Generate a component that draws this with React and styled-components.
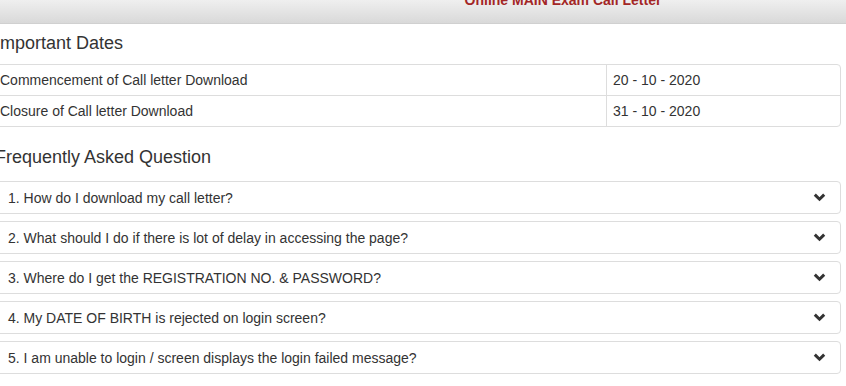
import React from 'react';
import styled, { createGlobalStyle } from 'styled-components';

const GlobalStyle = createGlobalStyle`
  body {
    margin: 0;
    background: #fff;
    font-family: "Liberation Sans", Arial, sans-serif;
    color: #333;
    overflow: hidden;
  }
`;

const Header = styled.div`
  height: 23px;
  background: linear-gradient(#efefef, #d9d9d9);
  border-bottom: 1px solid #d0d0d0;
  display: flex;
  justify-content: center;
  overflow: hidden;
`;

const HeaderTitle = styled.div`
  margin-top: -9px;
  margin-left: 280px;
  font-size: 14px;
  font-weight: bold;
  color: #a32626;
  line-height: 18px;
`;

const Content = styled.div`
  margin-left: -8px;
  width: 849px;
`;

const SectionTitle = styled.h3`
  margin: 0;
  padding: ${p => p.$pad || '8px 0 0 3px'};
  font-size: 18px;
  font-weight: normal;
  line-height: 22px;
  color: #333;
`;

const Table = styled.div`
  margin-top: 10px;
  border: 1px solid #ddd;
  border-radius: 4px;
  overflow: hidden;
`;

const Row = styled.div`
  display: grid;
  grid-template-columns: 613px 1fr;
  height: 30px;
  & + & {
    border-top: 1px solid #ddd;
  }
`;

const Cell = styled.div`
  padding: 0 8px 0 ${p => p.$padLeft || '7px'};
  font-size: 14px;
  line-height: 30px;
  & + & {
    border-left: 1px solid #ddd;
  }
`;

const PanelList = styled.div`
  margin-top: 13px;
  display: flex;
  flex-direction: column;
  gap: 7px;
`;

const Panel = styled.div`
  border: 1px solid #ddd;
  border-radius: 4px;
  height: 31px;
  padding: 0 14px 0 15px;
  display: flex;
  align-items: center;
  justify-content: space-between;
  font-size: 14px;
`;

const Chevron = () => (
  <svg width="13" height="9" viewBox="0 0 13 9">
    <polyline points="1.8,1.6 6.5,6.2 11.2,1.6" fill="none" stroke="#333" strokeWidth="3" />
  </svg>
);

const dates = [
  ['Commencement of Call letter Download', '20 - 10 - 2020'],
  ['Closure of Call letter Download', '31 - 10 - 2020'],
];

const questions = [
  '1. How do I download my call letter?',
  '2. What should I do if there is lot of delay in accessing the page?',
  '3. Where do I get the REGISTRATION NO. & PASSWORD?',
  '4. My DATE OF BIRTH is rejected on login screen?',
  '5. I am unable to login / screen displays the login failed message?',
];

export default function App() {
  return (
    <>
      <GlobalStyle />
      <Header>
        <HeaderTitle>Online MAIN Exam Call Letter</HeaderTitle>
      </Header>
      <Content>
        <SectionTitle>Important Dates</SectionTitle>
        <Table>
          {dates.map(([label, value]) => (
            <Row key={label}>
              <Cell>{label}</Cell>
              <Cell $padLeft="6px">{value}</Cell>
            </Row>
          ))}
        </Table>
        <SectionTitle $pad="19px 0 0 3px">Frequently Asked Question</SectionTitle>
        <PanelList>
          {questions.map(q => (
            <Panel key={q}>
              <span>{q}</span>
              <Chevron />
            </Panel>
          ))}
        </PanelList>
      </Content>
    </>
  );
}
